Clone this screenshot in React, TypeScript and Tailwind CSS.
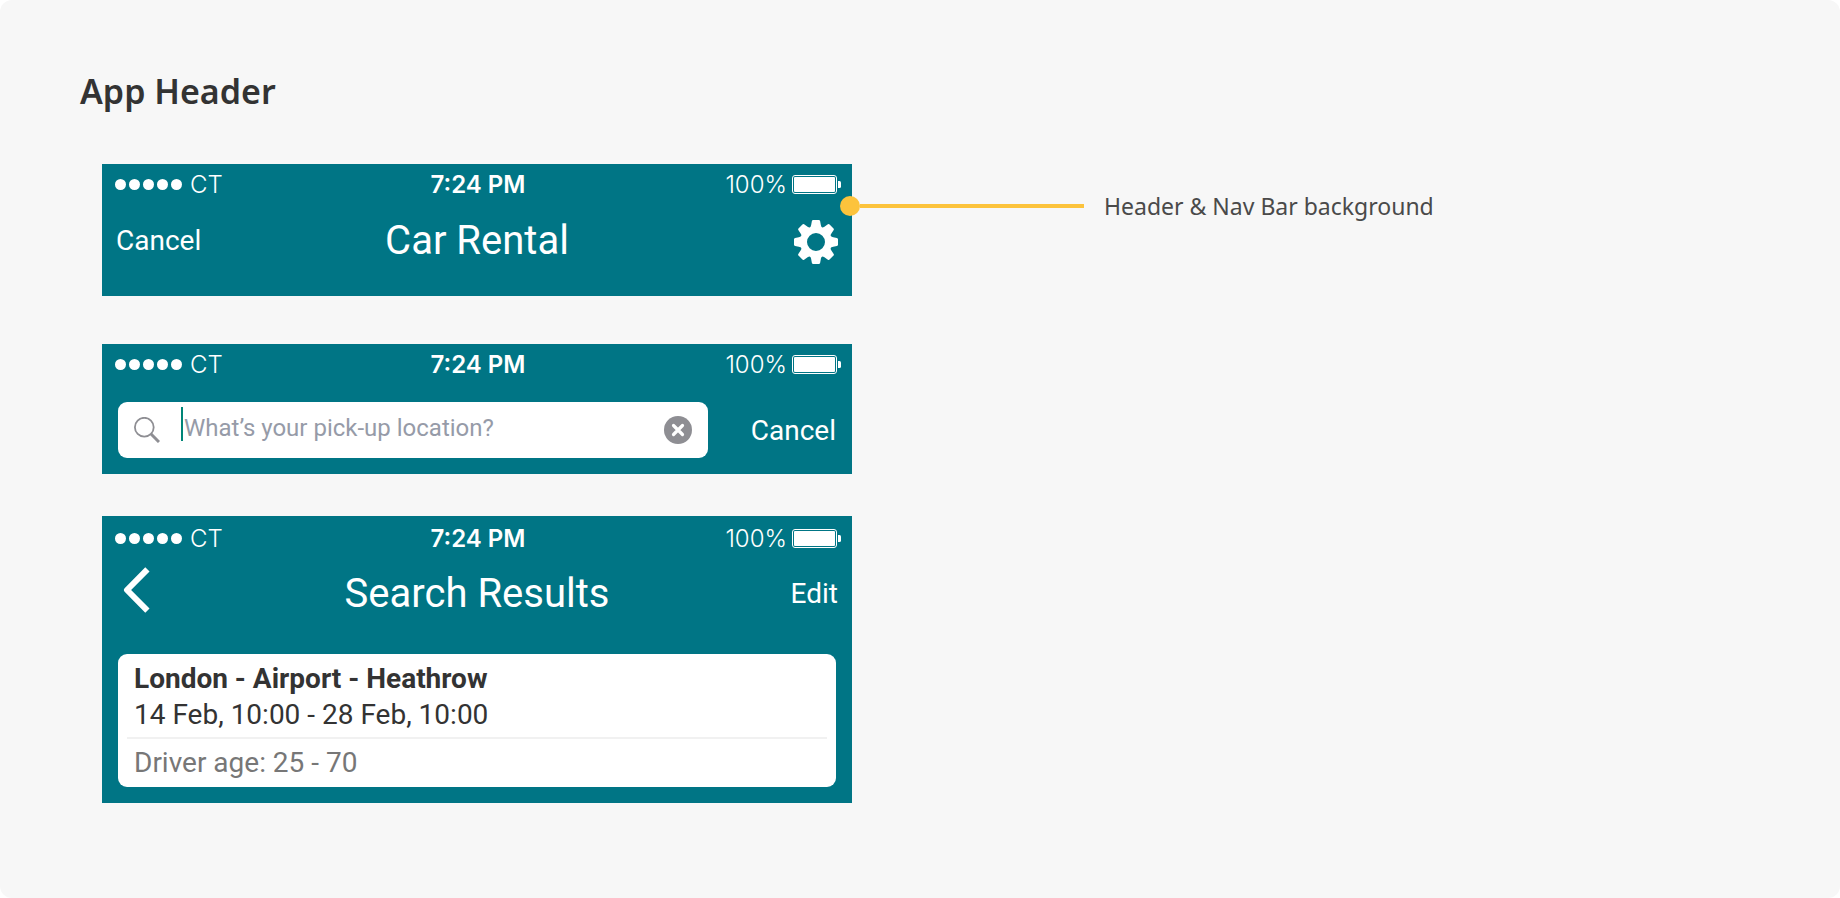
import type { ReactNode } from "react";

const TEETH = [0, 45, 90, 135, 180, 225, 270, 315];

function GearIcon() {
  return (
    <svg viewBox="-22 -22 44 44" className="size-11" fill="currentColor" aria-hidden="true">
      <circle r="12.4" fill="none" stroke="currentColor" strokeWidth="6.8" />
      {TEETH.map((angle) => (
        <path
          key={angle}
          transform={`rotate(${angle})`}
          d="M-6.4 -13.5 C-5.4 -15.2 -5 -16 -4.8 -17.2 L-4.1 -20.9 Q-3.8 -22 -2.8 -22 H2.8 Q3.8 -22 4.1 -20.9 L4.8 -17.2 C5 -16 5.4 -15.2 6.4 -13.5 Z"
        />
      ))}
    </svg>
  );
}

function BackIcon() {
  return (
    <svg viewBox="0 0 27 46" className="h-[46px] w-[27px]" fill="none" stroke="currentColor" strokeWidth="6" strokeLinejoin="round" aria-hidden="true">
      <path d="M24.4 2.4 L4 23 L24.4 43.6" />
    </svg>
  );
}

function SearchIcon() {
  return (
    <svg viewBox="0 0 26 26" className="size-[26px] shrink-0 text-[#8e8e93]" fill="none" stroke="currentColor" aria-hidden="true">
      <circle cx="10.3" cy="10.2" r="9.4" strokeWidth="1.8" />
      <path d="M16.8 16.8 L25 25" strokeWidth="3" />
    </svg>
  );
}

function ClearIcon() {
  return (
    <svg viewBox="0 0 28 28" className="size-7" aria-hidden="true">
      <circle cx="14" cy="14" r="14" fill="#8e8e93" />
      <path d="M9.5 9.5 L18.5 18.5 M18.5 9.5 L9.5 18.5" stroke="#fff" strokeWidth="3.2" strokeLinecap="round" />
    </svg>
  );
}

function BatteryIcon() {
  return (
    <svg viewBox="0 0 49 19" className="h-[19px] w-[49px]" aria-hidden="true">
      <rect x="0.5" y="0.5" width="44" height="18" rx="2.5" fill="none" stroke="#fff" />
      <rect x="2" y="2" width="41" height="15" rx="1" fill="#fff" />
      <path d="M46 6 H47.5 Q49 6 49 7.5 V11.5 Q49 13 47.5 13 H46 Z" fill="#fff" />
    </svg>
  );
}

function StatusBar() {
  return (
    <div className="grid h-10 grid-cols-[1fr_auto_1fr] items-center pr-[11px] pl-[13px] font-['Inter',sans-serif] text-2xl">
      <div className="flex items-center gap-2">
        <div className="flex gap-[3px]">
          {[1, 2, 3, 4, 5].map((dot) => (
            <span key={dot} className="size-[11px] rounded-full bg-white" />
          ))}
        </div>
        <span className="pt-0.5 font-light">CT</span>
      </div>
      <span className="pt-0.5 font-semibold">7:24 PM</span>
      <div className="flex items-center justify-end gap-[5px]">
        <span className="pt-0.5 font-light">100%</span>
        <BatteryIcon />
      </div>
    </div>
  );
}

function NavBar({ left, title, right }: { left: ReactNode; title: string; right: ReactNode }) {
  return (
    <div className="grid h-[72px] grid-cols-[1fr_auto_1fr] items-center px-3.5 text-[28px]">
      <div className="flex">{left}</div>
      <h2 className="text-[40px] leading-none">{title}</h2>
      <div className="flex justify-end">{right}</div>
    </div>
  );
}

function Panel({ className, children }: { className: string; children: ReactNode }) {
  return (
    <section className={`w-full max-w-[750px] bg-[#007585] font-['Roboto',sans-serif] text-white ${className}`}>
      {children}
    </section>
  );
}

export default function App() {
  return (
    <div className="min-h-screen bg-white">
      <main className="min-h-screen rounded-xl bg-[#f7f7f7] px-20 py-[67px] font-['Noto_Sans',sans-serif]">
        <h1 className="text-[34px] leading-[48px] font-semibold text-[#333]">App Header</h1>

        <div className="mt-[49px] ml-[22px] flex flex-col">
          <div className="flex items-start">
            <Panel className="shrink-0 pb-[19px]">
              <StatusBar />
              <div className="pt-px">
                <NavBar
                  left={<button type="button">Cancel</button>}
                  title="Car Rental"
                  right={
                    <button type="button" aria-label="Settings" className="pt-0.5">
                      <GearIcon />
                    </button>
                  }
                />
              </div>
            </Panel>
            <div className="mt-6 -ml-3 flex h-9 items-center">
              <span className="size-5 rounded-full bg-[#fcc33c]" />
              <span className="h-1 w-56 bg-[#fcc33c]" />
              <p className="ml-5 text-[23px] whitespace-nowrap text-[#4a4a4a]">Header &amp; Nav Bar background</p>
            </div>
          </div>

          <Panel className="mt-12 pb-4">
            <StatusBar />
            <div className="mt-[18px] flex items-center px-4">
              <div className="flex h-14 flex-1 items-center rounded-[9px] bg-white px-4">
                <SearchIcon />
                <div className="ml-[21px] flex flex-1 items-center pb-3">
                  <span className="h-[34px] w-0.5 bg-[#008577]" />
                  <input
                    type="text"
                    aria-label="Pick-up location"
                    placeholder="What’s your pick-up location?"
                    className="mt-2 w-full flex-1 pl-px text-2xl text-[#333] outline-none placeholder:text-[#969ba8]"
                  />
                </div>
                <button type="button" aria-label="Clear">
                  <ClearIcon />
                </button>
              </div>
              <button type="button" className="ml-[43px] pt-0.5 text-[28px]">
                Cancel
              </button>
            </div>
          </Panel>

          <Panel className="mt-[42px] pt-0.5 pb-4">
            <StatusBar />
            <NavBar
              left={
                <button type="button" aria-label="Back" className="ml-[7px] pb-2">
                  <BackIcon />
                </button>
              }
              title="Search Results"
              right={<button type="button">Edit</button>}
            />
            <div className="mx-4 mt-6 rounded-[9px] bg-white px-[9px] pt-[7px] text-[28px] leading-9 text-[#333]">
              <div className="border-b-2 border-[#f1f1f1] px-[7px] pb-1">
                <p className="font-bold">London - Airport - Heathrow</p>
                <p>14 Feb, 10:00 - 28 Feb, 10:00</p>
              </div>
              <p className="px-[7px] py-1.5 text-[#777]">Driver age: 25 - 70</p>
            </div>
          </Panel>
        </div>
      </main>
    </div>
  );
}
